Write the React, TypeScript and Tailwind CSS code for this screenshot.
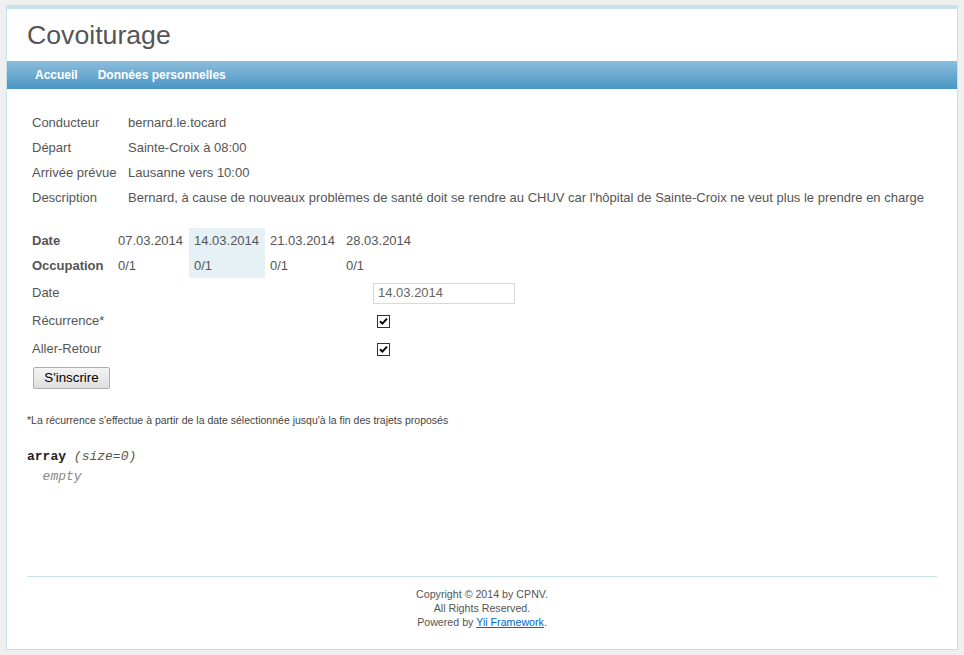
import React from "react";

const details = [
  { label: "Conducteur", value: "bernard.le.tocard" },
  { label: "Départ", value: "Sainte-Croix à 08:00" },
  { label: "Arrivée prévue", value: "Lausanne vers 10:00" },
  {
    label: "Description",
    value:
      "Bernard, à cause de nouveaux problèmes de santé doit se rendre au CHUV car l'hôpital de Sainte-Croix ne veut plus le prendre en charge",
  },
];

const trips = [
  { date: "07.03.2014", occupation: "0/1" },
  { date: "14.03.2014", occupation: "0/1", selected: true },
  { date: "21.03.2014", occupation: "0/1" },
  { date: "28.03.2014", occupation: "0/1" },
];

const menu = ["Accueil", "Données personnelles"];

function CheckBox() {
  return (
    <span className="ml-[4px] flex h-[13px] w-[13px] items-center justify-center border border-[#333] bg-white">
      <svg width="9" height="9" viewBox="0 0 9 9">
        <path d="M1 4.2 L3.4 6.6 L8 1.6" fill="none" stroke="#000" strokeWidth="2" />
      </svg>
    </span>
  );
}

export default function App() {
  return (
    <div
      className="min-h-[655px] bg-[#efefef] pt-[5px] pb-[5px] text-[#555]"
      style={{ fontFamily: '"Liberation Sans", Arial, sans-serif' }}
    >
      <div className="mx-auto w-[952px] border border-[#c9e0ed] bg-white">
        {/* header */}
        <div className="border-t-[3px] border-[#c9e0ed] px-[20px] py-[10px] text-[26.67px] leading-[32px]">
          Covoiturage
        </div>

        {/* main menu */}
        <div className="flex h-[28px] items-center gap-[4px] bg-gradient-to-b from-[#8cbddb] to-[#4896c4] px-[20px] pb-[1px]">
          {menu.map((m) => (
            <a key={m} className="px-[8px] text-[12px] font-bold text-white">
              {m}
            </a>
          ))}
        </div>

        {/* content */}
        <div className="px-[20px] pt-[21px] text-[13px]">
          <div className="flex flex-col">
            {details.map((d) => (
              <div key={d.label} className="flex h-[25px] items-center">
                <div className="w-[96px] shrink-0 pl-[5px]">{d.label}</div>
                <div className="whitespace-nowrap pl-[5px]">{d.value}</div>
              </div>
            ))}
          </div>

          <div className="mt-[18px] flex">
            <div className="flex w-[86px] flex-col pl-[5px] font-bold">
              <div className="flex h-[25px] items-center">Date</div>
              <div className="flex h-[25px] items-center">Occupation</div>
            </div>
            {trips.map((t) => (
              <div
                key={t.date}
                className={`flex w-[76px] flex-col pl-[5px] ${t.selected ? "bg-[#e5f1f4]" : ""}`}
              >
                <div className="flex h-[25px] items-center">{t.date}</div>
                <div className="flex h-[25px] items-center">{t.occupation}</div>
              </div>
            ))}
          </div>

          <div className="mt-[1px] flex flex-col">
            <div className="flex h-[28px] items-center">
              <div className="w-[346px] pl-[5px]">Date</div>
              <div className="flex h-[21px] w-[142px] items-center border border-[#d9d9d9] pl-[4px] text-[#666]">
                14.03.2014
              </div>
            </div>
            <div className="flex h-[28px] items-center">
              <div className="w-[346px] pl-[5px]">Récurrence*</div>
              <CheckBox />
            </div>
            <div className="flex h-[28px] items-center">
              <div className="w-[346px] pl-[5px]">Aller-Retour</div>
              <CheckBox />
            </div>
          </div>

          <button className="mt-[4px] ml-[6px] flex h-[22px] w-[77px] items-center justify-center rounded-[2px] border border-[#adadad] bg-gradient-to-b from-[#f4f4f4] to-[#dedede] text-[13.33px] text-black">
            S'inscrire
          </button>

          <p className="mt-[24px] text-[10.5px] leading-[14px] text-[#444]">
            *La récurrence s'effectue à partir de la date sélectionnée jusqu'à la fin des trajets proposés
          </p>

          <pre
            className="mt-[20px] text-[13px] leading-[20px] text-[#222]"
            style={{ fontFamily: '"Liberation Mono", "DejaVu Sans Mono", monospace' }}
          >
            <b>array</b> <i className="text-[#555]">(size=0)</i>
            {"\n  "}
            <i className="text-[#888a85]">empty</i>
          </pre>
        </div>

        {/* footer */}
        <div className="mx-[20px] mt-[89px] mb-[10px] border-t border-[#c9e0ed] pt-[10px] pb-[10px] text-center text-[10.67px] leading-[14px]">
          <div>Copyright © 2014 by CPNV.</div>
          <div>All Rights Reserved.</div>
          <div>
            Powered by <a className="text-[#06c] underline">Yii Framework</a>.
          </div>
        </div>
      </div>
    </div>
  );
}
